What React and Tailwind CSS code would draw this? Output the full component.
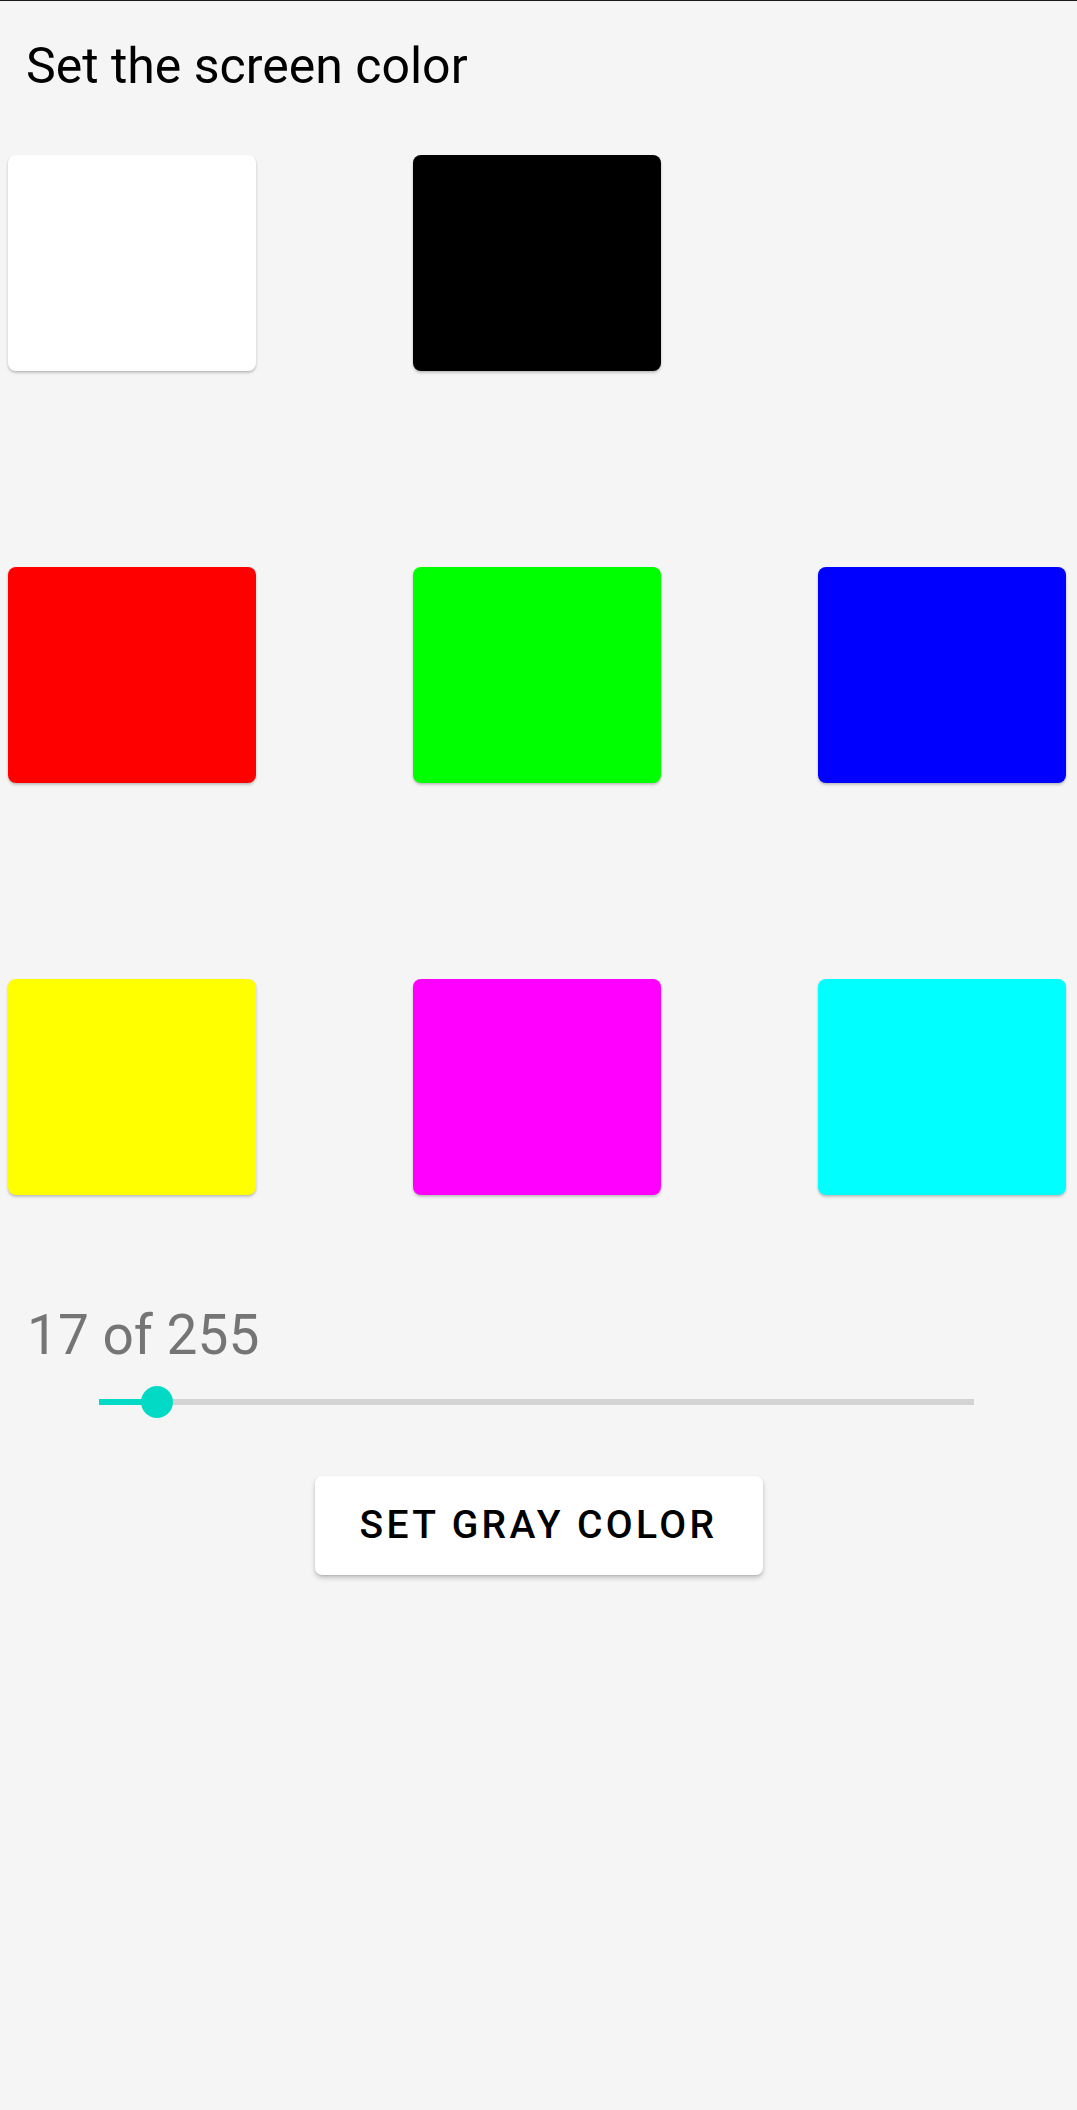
import React from 'react';

const rows = [
  ['#ffffff', '#000000', null],
  ['#ff0000', '#00ff00', '#0000ff'],
  ['#ffff00', '#ff00ff', '#00ffff'],
];

const Swatch = ({ color }) => {
  if (!color) return <div className="w-[248px] h-[216px]" />;
  return (
    <button
      className="w-[248px] h-[216px] rounded-[8px] shadow-[0_2px_3px_rgba(0,0,0,0.18),0_1px_2px_rgba(0,0,0,0.08)]"
      style={{ backgroundColor: color }}
    />
  );
};

export default function App() {
  const value = 17;
  const pct = (value / 255) * 100;

  return (
    <div
      className="w-[1077px] h-[2110px] bg-[#f5f5f5] border-t border-[#1a1a1a] flex flex-col"
      style={{ fontFamily: 'Roboto, "Liberation Sans", sans-serif' }}
    >
      {/* Title */}
      <h1 className="pl-[26px] pt-[32px] text-[50px] leading-[66px] text-black font-normal">
        Set the screen color
      </h1>

      {/* Swatch grid */}
      <div className="mt-[56px] pl-[8px] flex flex-col gap-[196px]">
        {rows.map((row, i) => (
          <div key={i} className="flex gap-[157px]">
            {row.map((c, j) => (
              <Swatch key={j} color={c} />
            ))}
          </div>
        ))}
      </div>

      {/* Gray level */}
      <div className="pl-[27px] mt-[105px] text-[55px] leading-[70px] text-[#757575]">
        {value} of 255
      </div>

      {/* Slider */}
      <div className="mt-[15px] ml-[99px] w-[875px] h-[34px] relative flex items-center">
        <div className="w-full h-[6px] bg-[#d3d3d3]" />
        <div className="absolute left-0 top-[14px] h-[6px] bg-[#03dac5]" style={{ width: `${pct}%` }} />
        <div
          className="absolute top-[1px] w-[32px] h-[32px] rounded-full bg-[#03dac5] -translate-x-1/2"
          style={{ left: `${pct}%` }}
        />
      </div>

      {/* Button */}
      <div className="flex justify-center mt-[57px]">
        <button className="w-[448px] h-[99px] bg-white rounded-[7px] shadow-[0_3px_5px_rgba(0,0,0,0.2),0_1px_2px_rgba(0,0,0,0.1)] text-[39px] font-medium tracking-[3.4px] text-black">
          SET GRAY COLOR
        </button>
      </div>
    </div>
  );
}
